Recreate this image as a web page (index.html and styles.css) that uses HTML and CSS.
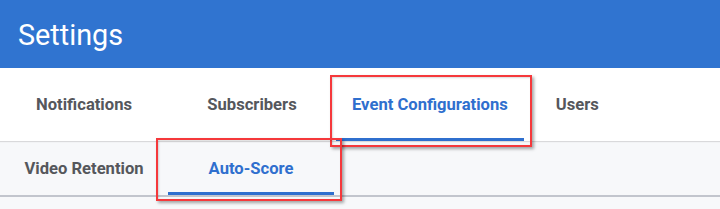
FILE: index.html
```html
<!DOCTYPE html>
<html>
<head>
<meta charset="utf-8">
<link rel="stylesheet" href="styles.css">
</head>
<body>
<div class="page">
  <header class="header"><h1 class="title">Settings</h1></header>
  <nav class="tabs tabs-main">
    <div class="tab">Notifications</div>
    <div class="tab">Subscribers</div>
    <div class="tab active">Event Configurations</div>
    <div class="tab tab-narrow">Users</div>
  </nav>
  <nav class="tabs tabs-sub">
    <div class="tab">Video Retention</div>
    <div class="tab active">Auto-Score</div>
  </nav>
  <div class="highlight highlight-one"></div>
  <div class="highlight highlight-two"></div>
</div>
</body>
</html>
```
FILE: styles.css
```css
html, body {
  margin: 0;
  padding: 0;
}
body {
  font-family: Roboto, "Liberation Sans", sans-serif;
  background: #f7f8fa;
  width: 720px;
  height: 209px;
  overflow: hidden;
}
.page {
  position: relative;
  height: 209px;
}
.header {
  background: #3074d0;
  height: 68px;
  display: flex;
  align-items: center;
  padding-left: 18px;
}
.title {
  margin: 0;
  color: #ffffff;
  font-weight: 400;
  font-size: 28.8px;
  line-height: 1;
  padding-top: 2px;
}
.tabs {
  display: flex;
}
.tabs-main {
  background: #ffffff;
  height: 73px;
  box-shadow: 0 1px 1px rgba(0, 0, 0, 0.12);
  position: relative;
}
.tabs-sub {
  margin-top: 1px;
  height: 53px;
  border-bottom: 2px solid #c2c5cd;
}
.tab {
  min-width: 168px;
  box-sizing: border-box;
  padding: 0 16px;
  display: flex;
  align-items: center;
  justify-content: center;
  font-size: 16.6px;
  font-weight: 700;
  color: #55575c;
  border-bottom: 3px solid transparent;
  padding-top: 3px;
}
.tab-narrow {
  min-width: 0;
  padding-left: 32px;
  padding-right: 32px;
}
.tab.active {
  color: #2f6fce;
  border-bottom-color: #2f6fce;
}
.tabs-sub .tab.active {
  min-width: 166px;
}
.highlight {
  position: absolute;
  border: 2.5px solid #f5383b;
  box-shadow: 2px 2px 3px rgba(0, 0, 0, 0.35), inset 1px 1px 2px rgba(0, 0, 0, 0.15);
}
.highlight-one {
  left: 330px;
  top: 75px;
  width: 198px;
  height: 68px;
}
.highlight-two {
  left: 156px;
  top: 138px;
  width: 182px;
  height: 59px;
}
```
